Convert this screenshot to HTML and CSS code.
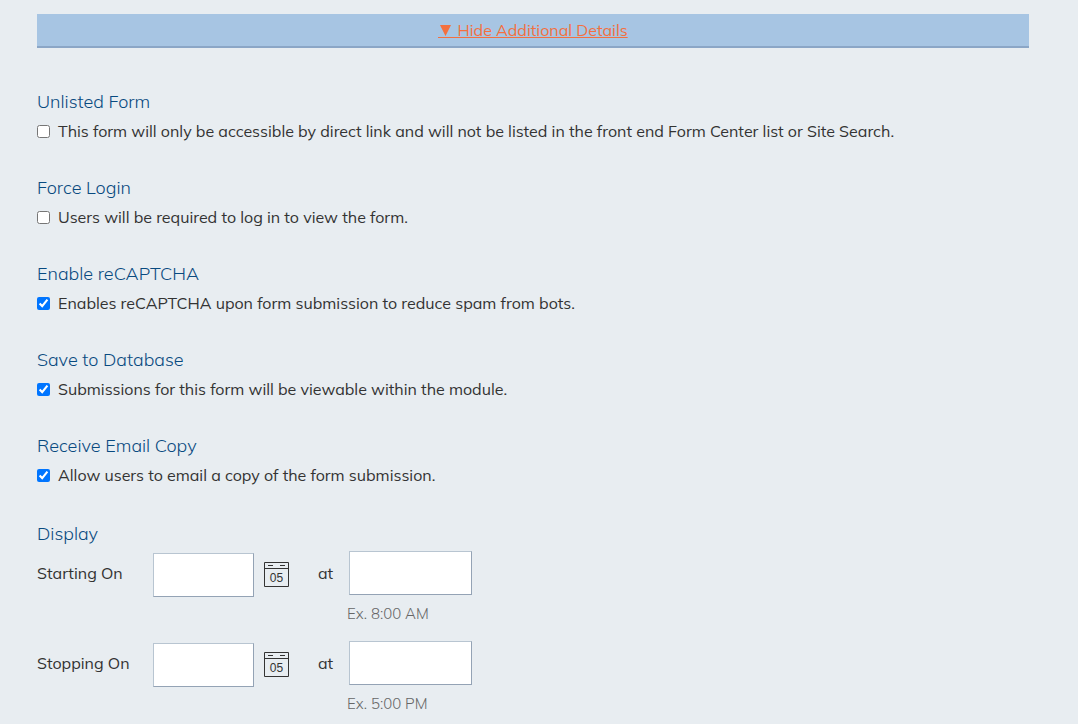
FILE: index.html
```html
<!DOCTYPE html>
<html lang="en">
<head>
    <meta charset="UTF-8">
    <meta name="viewport" content="width=device-width, initial-scale=1.0">
    <title>Form Details</title>
    <link rel="stylesheet" href="styles.css">
</head>
<body>
    <form class="details">
        <div class="toggle-bar">
            <a href="#options" class="toggle"><svg class="arrow" width="15" height="11" viewBox="0 0 15 11" aria-hidden="true"><path d="M2 0H13L7.5 11ZM0 12H16V13H0Z" fill="currentColor"/></svg> Hide Additional Details</a>
        </div>

        <div id="options">
            <div class="group">
                <h2>Unlisted Form</h2>
                <label class="check"><input type="checkbox"> This form will only be accessible by direct link and will not be listed in the front end Form Center list or Site Search.</label>
            </div>
            <div class="group">
                <h2>Force Login</h2>
                <label class="check"><input type="checkbox"> Users will be required to log in to view the form.</label>
            </div>
            <div class="group">
                <h2>Enable reCAPTCHA</h2>
                <label class="check"><input type="checkbox" checked> Enables reCAPTCHA upon form submission to reduce spam from bots.</label>
            </div>
            <div class="group">
                <h2>Save to Database</h2>
                <label class="check"><input type="checkbox" checked> Submissions for this form will be viewable within the module.</label>
            </div>
            <div class="group">
                <h2>Receive Email Copy</h2>
                <label class="check"><input type="checkbox" checked> Allow users to email a copy of the form submission.</label>
            </div>

            <div class="display">
                <h2>Display</h2>
                <div class="date-row">
                    <label for="startDate">Starting On</label>
                    <div class="date">
                        <input type="text" id="startDate">
                        <button type="button" class="calendar" aria-label="Choose start date">
                            <svg width="25" height="25" viewBox="0 0 25 25">
                                <path d="M.5 .5H24.5V24.5H.5ZM0 6.5H25M4 3.5H9M16 3.5H21" fill="none" stroke="#333" stroke-width="1"/>
                                <text x="12.5" y="20" text-anchor="middle">05</text>
                            </svg>
                        </button>
                    </div>
                    <label for="startTime">at</label>
                    <div class="time">
                        <input type="text" id="startTime">
                        <span class="hint">Ex. 8:00 AM</span>
                    </div>
                </div>
                <div class="date-row">
                    <label for="stopDate">Stopping On</label>
                    <div class="date">
                        <input type="text" id="stopDate">
                        <button type="button" class="calendar" aria-label="Choose stop date">
                            <svg width="25" height="25" viewBox="0 0 25 25">
                                <path d="M.5 .5H24.5V24.5H.5ZM0 6.5H25M4 3.5H9M16 3.5H21" fill="none" stroke="#333" stroke-width="1"/>
                                <text x="12.5" y="20" text-anchor="middle">05</text>
                            </svg>
                        </button>
                    </div>
                    <label for="stopTime">at</label>
                    <div class="time">
                        <input type="text" id="stopTime">
                        <span class="hint">Ex. 5:00 PM</span>
                    </div>
                </div>
            </div>
        </div>
    </form>
</body>
</html>
```
FILE: styles.css
```css
* {
    box-sizing: border-box;
}
body {
    margin: 0;
    background-color: #e8edf1;
    color: #333;
    font-family: Muli, Mulish, "Open Sans", sans-serif;
    font-size: 16px;
    line-height: 24px;
}
.details {
    padding: 14px 49px 0 37px;
}
.toggle-bar {
    margin-bottom: 42px;
    padding: 4px 0;
    background-color: #a7c5e3;
    border-bottom: 2px solid #8ba6c6;
    text-align: center;
}
.toggle {
    color: #f3703f;
}
.arrow {
    overflow: visible;
}
.group {
    margin-bottom: 33px;
}
h2 {
    margin: 0 0 5px;
    color: #084a80;
    font-size: 18px;
    font-weight: 300;
    line-height: 24px;
}
.check {
    display: flex;
    align-items: center;
    gap: 8px;
}
.check input {
    flex: none;
    width: 13px;
    height: 13px;
    margin: 0;
}
.display {
    padding-top: 2px;
}
.date-row {
    display: grid;
    grid-template-columns: 116px 165px 29px 1fr;
    height: 90px;
    line-height: 44px;
}
.date {
    display: flex;
    align-items: flex-start;
    gap: 10px;
    padding-top: 2px;
}
.date input,
.time input {
    height: 44px;
    padding: 4px 8px;
    background-color: #fff;
    border: 1px solid;
    border-color: #b8c5d1 #94a3b5 #94a3b5 #b8c5d1;
    font: inherit;
}
.date input {
    width: 101px;
}
.time input {
    width: 123px;
    margin: 0 0 7px 2px;
}
.time {
    display: flex;
    flex-direction: column;
}
.calendar {
    margin: 9px 0 0;
    padding: 0;
    background: none;
    border: 0;
    line-height: 0;
    cursor: pointer;
}
.calendar text {
    fill: #333;
    font: 12px "Liberation Sans", sans-serif;
}
.hint {
    color: #666;
    font-size: 15px;
    font-weight: 300;
    line-height: 24px;
}
```
